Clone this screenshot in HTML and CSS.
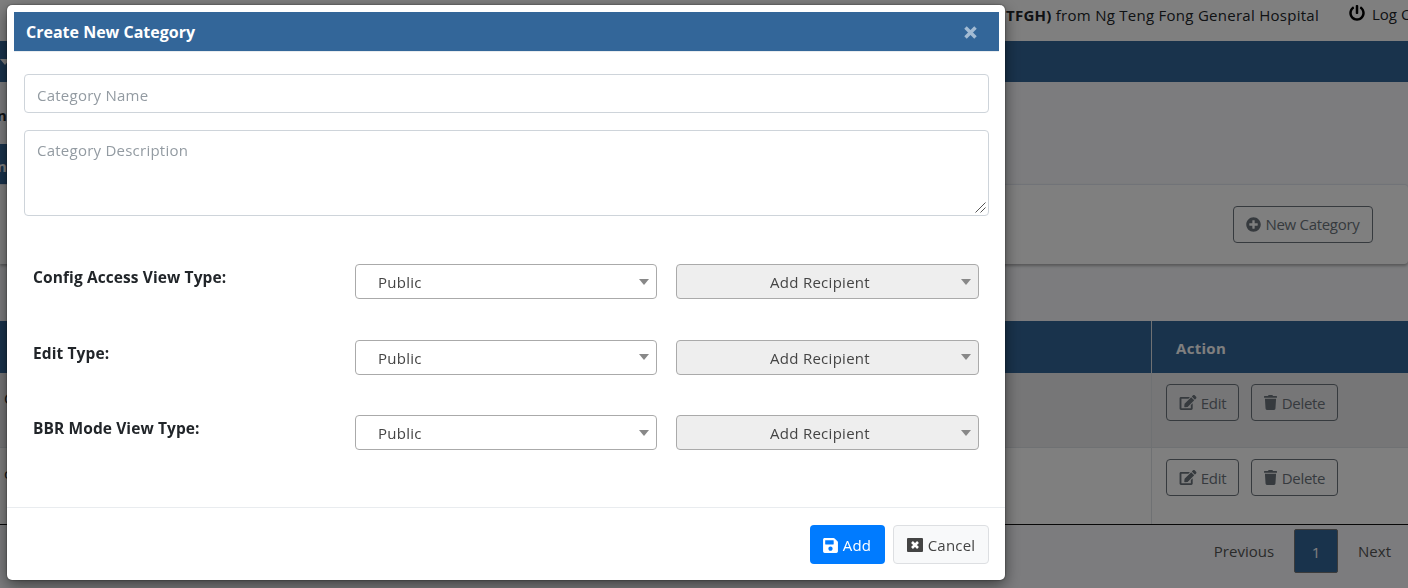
FILE: index.html
```html
<!DOCTYPE html>
<html lang="en">
<head>
    <meta charset="UTF-8">
    <meta name="viewport" content="width=device-width, initial-scale=1.0">
    <title>Create New Category</title>
    <link rel="stylesheet" href="styles.css">
</head>
<body>
    <svg class="sprite" width="0" height="0">
        <symbol id="edit" viewBox="0 0 576 512"><path d="M402.6 83.2l90.2 90.2c3.8 3.8 3.8 10 0 13.8L274.4 405.6l-92.8 10.3c-12.4 1.4-22.9-9.1-21.5-21.5l10.3-92.8L388.8 83.2c3.8-3.8 10-3.8 13.8 0zm162-22.9l-48.8-48.8c-15.2-15.2-39.9-15.2-55.2 0l-35.4 35.4c-3.8 3.8-3.8 10 0 13.8l90.2 90.2c3.8 3.8 10 3.8 13.8 0l35.4-35.4c15.2-15.3 15.2-40 0-55.2zM384 346.2V448H64V128h229.8c3.2 0 6.2-1.3 8.5-3.5l40-40c7.6-7.6 2.2-20.5-8.5-20.5H48C21.5 64 0 85.5 0 112v352c0 26.5 21.5 48 48 48h352c26.5 0 48-21.5 48-48V306.2c0-10.7-12.9-16-20.5-8.5l-40 40c-2.2 2.3-3.5 5.3-3.5 8.5z"/></symbol>
        <symbol id="trash" viewBox="0 0 448 512"><path d="M432 32H312l-9.4-18.7A24 24 0 0 0 281.1 0H166.8a23.7 23.7 0 0 0-21.4 13.3L136 32H16A16 16 0 0 0 0 48v32a16 16 0 0 0 16 16h416a16 16 0 0 0 16-16V48a16 16 0 0 0-16-16zM53.2 467a48 48 0 0 0 47.9 45h245.8a48 48 0 0 0 47.9-45L416 128H32z"/></symbol>
    </svg>

    <div class="page">
        <div class="topbar">
            <span class="user"><b>(NTFGH)</b> from Ng Teng Fong General Hospital</span>
            <svg class="power" viewBox="0 0 512 512"><path d="M400 54.1c63 45 104 118.6 104 201.9 0 136.800-110.800 247.700-247.500 248C120 504.300 8.200 393 8 256.400 7.900 173.100 48.900 99.300 111.800 54.200c11.700-8.300 28-4.800 35 7.700L162.600 90c5.900 10.500 3.100 23.800-6.600 31-41.500 30.800-68 79.600-68 134.900-.1 92.300 74.500 168.100 168 168.100 91.600 0 168.600-74.200 168-169.100-.3-51.800-24.700-101.800-68.100-134-9.700-7.200-12.400-20.500-6.500-30.900l15.800-28.100c7-12.400 23.200-16.100 34.800-7.800zM296 264V24c0-13.300-10.700-24-24-24h-32c-13.300 0-24 10.700-24 24v240c0 13.300 10.700 24 24 24h32c13.300 0 24-10.700 24-24z"/></svg>
            <span class="logout">Log Out</span>
        </div>
        <div class="nav"><i class="caret light"></i></div>
        <div class="heading">
            <div class="title"><span>n</span></div>
            <div class="tab"><span>n</span></div>
        </div>
        <div class="toolbar">
            <button class="btn-outline new">
                <svg class="plus" viewBox="0 0 512 512"><path d="M256 8C119 8 8 119 8 256s111 248 248 248 248-111 248-248S393 8 256 8zm144 276c0 6.600-5.400 12-12 12h-92v92c0 6.600-5.400 12-12 12h-56c-6.600 0-12-5.400-12-12v-92h-92c-6.600 0-12-5.400-12-12v-56c0-6.600 5.400-12 12-12h92v-92c0-6.600 5.400-12 12-12h56c6.600 0 12 5.400 12 12v92h92c6.600 0 12 5.400 12 12v56z"/></svg>
                <span>New Category</span>
            </button>
        </div>
        <div class="table">
            <div class="row head">
                <div class="cell"></div>
                <div class="cell action">Action</div>
            </div>
            <div class="row odd">
                <div class="cell name">C</div>
                <div class="cell">
                    <button class="btn-outline edit"><svg><use href="#edit"/></svg><span>Edit</span></button>
                    <button class="btn-outline delete"><svg><use href="#trash"/></svg><span>Delete</span></button>
                </div>
            </div>
            <div class="row even">
                <div class="cell name">c</div>
                <div class="cell">
                    <button class="btn-outline edit"><svg><use href="#edit"/></svg><span>Edit</span></button>
                    <button class="btn-outline delete"><svg><use href="#trash"/></svg><span>Delete</span></button>
                </div>
            </div>
        </div>
        <div class="pager">
            <span class="prev">Previous</span>
            <span class="current">1</span>
            <span class="next">Next</span>
        </div>
    </div>

    <div class="backdrop">
        <div class="modal">
            <div class="modal-header">
                <span class="modal-title">Create New Category</span>
                <svg class="close" viewBox="0 0 12 12"><path d="M2 2L10 10M10 2L2 10"/></svg>
            </div>
            <div class="modal-body">
                <input class="field" type="text" placeholder="Category Name">
                <textarea class="field" placeholder="Category Description"></textarea>
                <div class="options">
                    <label>Config Access View Type:</label>
                    <div class="select"><span>Public</span><i class="caret"></i></div>
                    <div class="select disabled"><span>Add Recipient</span><i class="caret"></i></div>
                    <label>Edit Type:</label>
                    <div class="select"><span>Public</span><i class="caret"></i></div>
                    <div class="select disabled"><span>Add Recipient</span><i class="caret"></i></div>
                    <label>BBR Mode View Type:</label>
                    <div class="select"><span>Public</span><i class="caret"></i></div>
                    <div class="select disabled"><span>Add Recipient</span><i class="caret"></i></div>
                </div>
            </div>
            <div class="modal-footer">
                <button class="btn add">
                    <svg viewBox="0 0 448 512"><path d="M433.900 129.900l-83.900-83.900A48 48 0 0 0 316.100 32H48C21.500 32 0 53.500 0 80v352c0 26.500 21.500 48 48 48h352c26.500 0 48-21.500 48-48V163.900a48 48 0 0 0-14.100-34zM224 416c-35.300 0-64-28.700-64-64s28.700-64 64-64 64 28.700 64 64-28.700 64-64 64zm96-304.500V212c0 6.600-5.400 12-12 12H76c-6.600 0-12-5.400-12-12V108c0-6.600 5.400-12 12-12h228.500c3.200 0 6.200 1.300 8.500 3.500l3.500 3.500A12 12 0 0 1 320 111.500z"/></svg>
                    <span>Add</span>
                </button>
                <button class="btn cancel">
                    <svg viewBox="0 0 16 14"><rect width="16" height="14" rx="1"/><path class="cross" d="M5 4L11 10M11 4L5 10"/></svg>
                    <span>Cancel</span>
                </button>
            </div>
        </div>
    </div>
</body>
</html>
```

FILE: styles.css
```css
* {
    box-sizing: border-box;
}
body {
    margin: 0;
    height: 588px;
    overflow: hidden;
    font-family: "Open Sans", "Noto Sans", sans-serif;
    font-size: 15px;
    line-height: 24px;
    color: #212529;
    background: #f8f9fc;
}
button, input, textarea {
    font: inherit;
}
.sprite {
    position: absolute;
}

/* page behind the dialog */
.topbar {
    display: flex;
    justify-content: flex-end;
    height: 41px;
    padding-top: 3px;
    margin-right: -20px;
    background: #fff;
}
.user {
    letter-spacing: 0.27px;
}
.power {
    width: 16px;
    height: 16px;
    margin: 2px 7px 0 30px;
}
.logout {
    width: 56px;
    margin-top: -1px;
    white-space: nowrap;
}
.nav {
    display: flex;
    height: 41px;
    padding-top: 18px;
    background: #336699;
}
.caret {
    width: 0;
    height: 0;
    border: 5px solid transparent;
    border-top: 6px solid #888;
    border-bottom: 0;
}
.caret.light {
    border-top-color: #fff;
}
.heading {
    height: 102px;
    font-weight: bold;
}
.title {
    height: 62px;
    padding-top: 21px;
}
.tab {
    width: 200px;
    height: 41px;
    padding-top: 10px;
    color: #fff;
    background: #336699;
}
.title span, .tab span {
    margin-left: -3px;
}
.toolbar {
    display: flex;
    justify-content: flex-end;
    height: 80px;
    padding: 21px 35px 0 0;
    background: #fff;
    border-top: 1px solid #e3e6f0;
    border-radius: 0 4px 4px 0;
    box-shadow: 0 2px 3px rgba(0, 0, 0, 0.3);
}
.btn-outline {
    display: flex;
    align-items: center;
    justify-content: center;
    height: 37px;
    padding: 0;
    letter-spacing: -0.3px;
    color: #6c757d;
    background: transparent;
    border: 1px solid #6c757d;
    border-radius: 4px;
}
.btn-outline svg {
    width: 18px;
    height: 15px;
    margin-right: 4px;
    fill: currentColor;
}
.btn-outline .plus {
    width: 15px;
    margin-right: 4px;
}
.new {
    width: 140px;
}
.new span {
    margin-top: -2px;
}
.edit {
    width: 73px;
}
.delete {
    width: 87px;
}
.btn-outline.delete svg {
    width: 13px;
    margin-right: 5px;
}
.table {
    margin-top: 57px;
    border-bottom: 1px solid #111;
}
.row {
    display: grid;
    grid-template-columns: 1152px 1fr;
    height: 75px;
}
.head {
    height: 52px;
    letter-spacing: 0.3px;
    color: #fff;
    font-weight: bold;
    background: #336699;
}
.odd {
    background: #ececee;
    border-bottom: 1px solid #dee2e6;
}
.even {
    height: 76px;
    background: #fff;
}
.cell {
    display: flex;
    align-items: flex-start;
    gap: 12px;
    padding: 11px 14px;
}
.cell:first-child {
    border-right: 1px solid #dee2e6;
}
.name {
    padding: 13px 4px;
}
.action {
    padding: 15px 24px;
}
.pager {
    display: flex;
    justify-content: flex-end;
    padding: 4px 17px 0 0;
    line-height: 44px;
    color: #555;
}
.current {
    width: 44px;
    height: 44px;
    margin: 0 20px;
    text-align: center;
    color: #fff;
    background: #336699;
    border: 1px solid #777;
    border-radius: 2px;
}

/* dialog */
.backdrop {
    position: fixed;
    inset: 0;
    padding: 5px 7px;
    background: rgba(0, 0, 0, 0.5);
}
.modal {
    display: flex;
    flex-direction: column;
    width: 998px;
    height: 575px;
    background: #fff;
    border-radius: 5px;
    box-shadow: 0 5px 15px rgba(0, 0, 0, 0.5), 0 0 2px rgba(0, 0, 0, 0.6);
}
.modal-header {
    display: flex;
    justify-content: space-between;
    align-items: center;
    height: 40px;
    margin: 7px 6px 0 7px;
    padding: 0 21px 0 12px;
    font-size: 16px;
    color: #fff;
    font-weight: bold;
    background: #336699;
    border-bottom: 1px solid #e9ecef;
}
.close {
    width: 15px;
    height: 15px;
    margin-top: 2px;
    fill: none;
    stroke: #a3bbd3;
    stroke-width: 2.8;
}
.modal-body {
    flex: 1;
    padding: 22px 16px 0 17px;
}
.field {
    display: block;
    width: 100%;
    height: 39px;
    margin-bottom: 17px;
    padding: 4px 12px 2px;
    letter-spacing: 0.24px;
    border: 1px solid #ced4da;
    border-radius: 4px;
    outline: none;
}
textarea.field {
    height: 86px;
    padding-top: 7px;
    margin-bottom: 48px;
}
.field::-webkit-resizer {
    background: url('data:image/svg+xml,<svg xmlns="http://www.w3.org/2000/svg" width="15" height="15"><path d="M2.500 12.500L12.500 2.500M7.500 12.500L12.500 7.500" stroke="%23555"/></svg>') no-repeat right bottom;
}
.field::placeholder {
    color: #939ba2;
}
.options {
    display: grid;
    grid-template-columns: 303px 302px 303px;
    grid-auto-rows: 35px;
    gap: 40.5px 19px;
    padding-left: 9px;
}
.options label {
    padding-top: 1px;
    font-size: 15.5px;
    letter-spacing: 0.1px;
    font-weight: bold;
}
.select {
    display: flex;
    align-items: center;
    padding: 1px 7px 0 22px;
    letter-spacing: 0.27px;
    color: #444;
    border: 1px solid #aaa;
    border-radius: 4px;
}
.select span {
    flex: 1;
}
.select .caret {
    margin-top: -1px;
}
.disabled {
    padding-left: 2px;
    text-align: center;
    background: #eee;
}
.modal-footer {
    display: flex;
    justify-content: flex-end;
    gap: 8px;
    height: 73px;
    padding: 17px 16px 0;
    border-top: 1px solid #e9ecef;
}
.btn {
    display: flex;
    align-items: center;
    justify-content: center;
    gap: 5px;
    height: 39px;
    padding: 0;
    letter-spacing: 0.2px;
    border: 1px solid transparent;
    border-radius: 4px;
}
.btn svg {
    width: 15px;
    height: 17px;
    margin-top: 1px;
    fill: currentColor;
}
.add {
    width: 75px;
    padding-right: 1px;
    color: #fff;
    background: #007bff;
}
.cancel {
    width: 96px;
    color: #444;
    background: #f8f9fa;
    border-color: #dddfe2;
}
.cancel svg {
    width: 16px;
    height: 14px;
}
.cross {
    stroke: #fff;
    stroke-width: 2.6;
}
```
